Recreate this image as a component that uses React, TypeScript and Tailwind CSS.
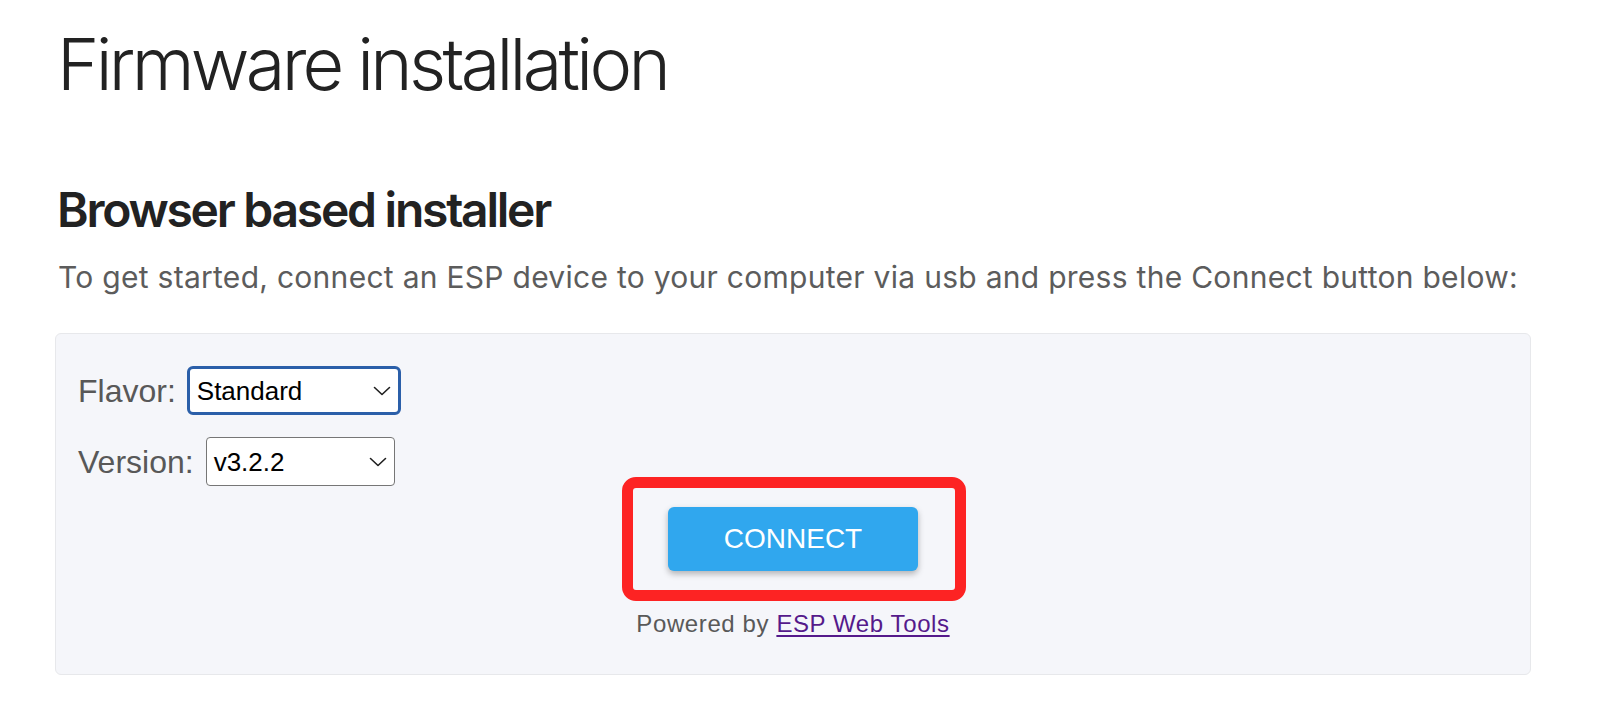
import React from "react";

function Chevron({ className }: { className?: string }) {
  return (
    <svg className={className} width="18" height="10" viewBox="0 0 18 10" fill="none">
      <path d="M1.5 1.5 L9 8.5 L16.5 1.5" stroke="#1f1f1f" strokeWidth="1.6" strokeLinecap="round" strokeLinejoin="round" />
    </svg>
  );
}

export default function App() {
  return (
    <div className="min-h-screen w-full bg-white pl-[55px] font-['Inter',sans-serif]">
      <h1 className="ml-[2px] pt-[28px] text-[72px] font-light leading-none text-[#222222] tracking-[-3.7px]">
        Firmware installation
      </h1>
      <h2 className="ml-[2px] mt-[86px] text-[48px] font-semibold leading-none text-[#222222] tracking-[-2.25px]">
        Browser based installer
      </h2>
      <p className="ml-[3px] mt-[28px] text-[30px] leading-none text-[#5c5c5c] tracking-[0.28px]">
        To get started, connect an ESP device to your computer via usb and press the Connect button below:
      </p>

      <div className="mt-[41px] flex h-[342px] w-[1476px] flex-col rounded-[6px] border border-[#e7e8eb] bg-[#f5f6fa] px-[22px] pt-[32px] font-['Liberation_Sans',Arial,sans-serif]">
        <div className="flex items-center gap-[11px]">
          <span className="text-[32px] leading-none text-[#585858]">Flavor:</span>
          <div className="flex h-[49px] w-[214px] items-center justify-between rounded-[6px] border-[3px] border-[#2b5fa9] bg-white pl-[7px] pr-[7px]">
            <span className="text-[26px] leading-none text-black">Standard</span>
            <Chevron />
          </div>
        </div>
        <div className="mt-[22px] flex items-center gap-[12px]">
          <span className="text-[32px] leading-none text-[#585858]">Version:</span>
          <div className="flex h-[49px] w-[189px] items-center justify-between rounded-[4px] border-[1.5px] border-[#767676] bg-white pl-[7px] pr-[7px]">
            <span className="text-[26px] leading-none text-black">v3.2.2</span>
            <Chevron />
          </div>
        </div>

        <div className="mt-[21px] flex justify-center">
          <div className="relative">
            <button className="flex h-[64px] w-[250px] items-center justify-center rounded-[6px] bg-[#30a7ee] text-[28px] leading-none text-white shadow-[0_3px_6px_rgba(0,0,0,0.28)]">
              CONNECT
            </button>
            <div className="pointer-events-none absolute -bottom-[30px] -left-[46px] -right-[48px] -top-[30px] rounded-[14px] border-[11px] border-[#fd2323]" />
          </div>
        </div>

        <div className="mt-[41px] text-center text-[24px] leading-none tracking-[0.6px] text-[#595959]">
          Powered by{" "}
          <a href="#" className="text-[#551a8b] underline underline-offset-[3px]">
            ESP Web Tools
          </a>
        </div>
      </div>
    </div>
  );
}
